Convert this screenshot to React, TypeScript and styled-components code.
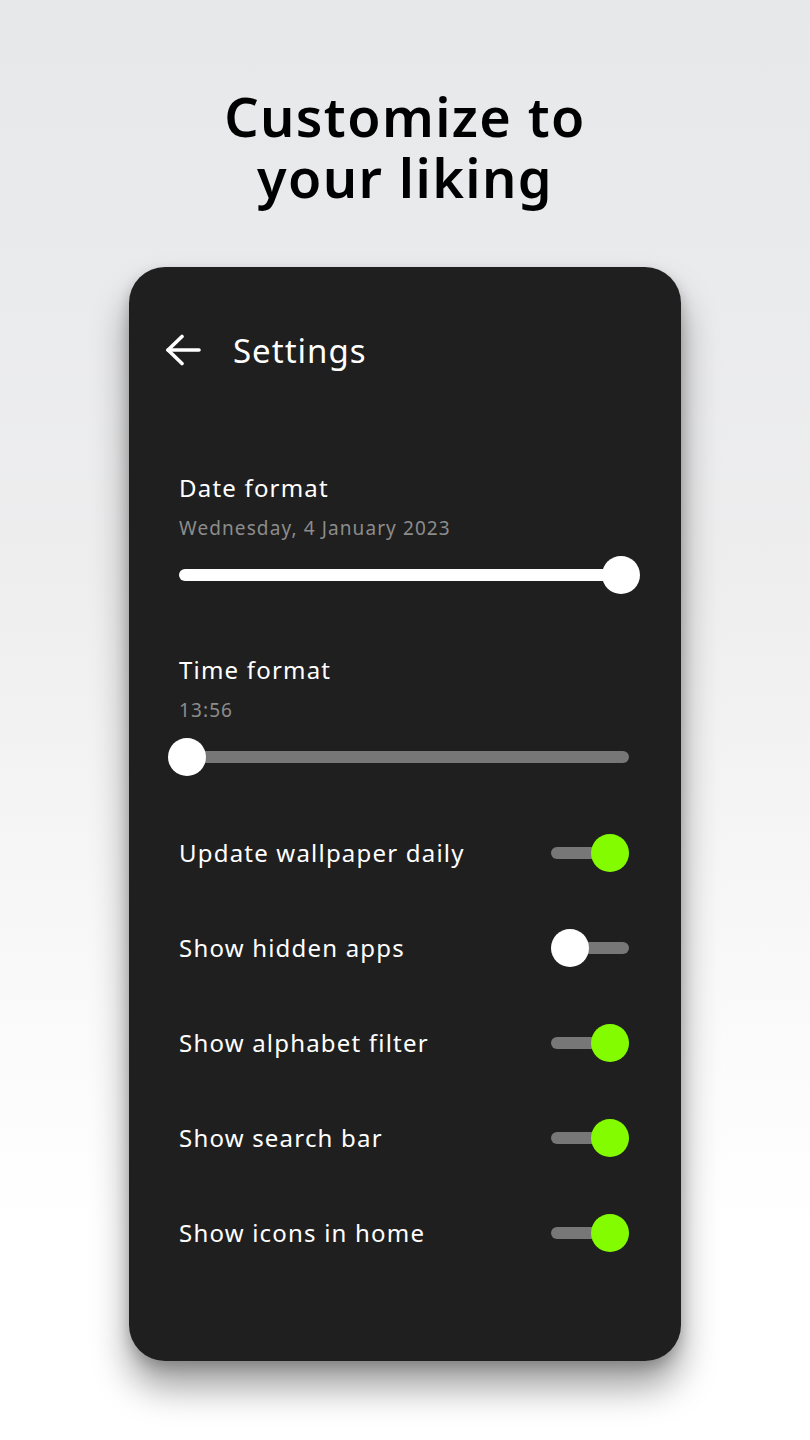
import React from 'react';
import styled, { createGlobalStyle } from 'styled-components';

const GlobalStyle = createGlobalStyle`
  html, body {
    margin: 0;
    padding: 0;
  }
  body {
    min-height: 1440px;
    background: linear-gradient(180deg, #e7e8ea 0%, #eeeeef 40%, #f8f8f8 65%, #ffffff 85%);
    font-family: 'Noto Sans', 'Open Sans', sans-serif;
  }
`;

const Page = styled.div`
  width: 810px;
  height: 1440px;
  display: flex;
  flex-direction: column;
  align-items: center;
  overflow: hidden;
`;

const Title = styled.h1`
  margin: 86px 0 0;
  height: 181px;
  font-size: 54px;
  line-height: 61px;
  font-weight: 600;
  letter-spacing: 1.4px;
  color: #000;
  text-align: center;
`;

const Card = styled.div`
  width: 552px;
  box-sizing: border-box;
  padding: 58px 52px 81px 50px;
  background: #1f1f1f;
  border-radius: 36px;
  box-shadow: 0 26px 36px rgba(0, 0, 0, 0.38), 0 6px 14px rgba(0, 0, 0, 0.2);
  color: #fff;
`;

const Header = styled.div`
  display: flex;
  align-items: center;
  height: 50px;
  margin-left: -14px;
  gap: 32px;
`;

const HeaderTitle = styled.span`
  font-size: 33px;
  font-weight: 400;
  letter-spacing: 1px;
`;

const Section = styled.div<{ $top: number }>`
  margin-top: ${(p) => p.$top}px;
`;

const Label = styled.div`
  font-size: 24px;
  line-height: 30px;
  height: 30px;
  letter-spacing: 1.2px;
`;

const Sub = styled.div`
  margin-top: 13px;
  font-size: 19px;
  line-height: 24px;
  letter-spacing: 1.1px;
  color: #8c8c8c;
`;

const SliderWrap = styled.div`
  position: relative;
  margin-top: 16px;
  height: 38px;
  display: flex;
  align-items: center;
`;

const Track = styled.div<{ $active: boolean }>`
  width: 100%;
  height: 12px;
  border-radius: 6px;
  background: ${(p) => (p.$active ? '#ffffff' : '#777777')};
`;

const Thumb = styled.div<{ $end: boolean }>`
  position: absolute;
  top: 0;
  ${(p) => (p.$end ? 'right: -11px;' : 'left: -11px;')}
  width: 38px;
  height: 38px;
  border-radius: 50%;
  background: #fff;
`;

const ToggleList = styled.div`
  margin-top: 29px;
`;

const Row = styled.div`
  display: flex;
  align-items: center;
  justify-content: space-between;
  height: 95px;
`;

const SwitchBox = styled.div`
  position: relative;
  width: 78px;
  height: 38px;
  display: flex;
  align-items: center;
`;

const SwitchTrack = styled.div`
  width: 100%;
  height: 12px;
  border-radius: 6px;
  background: #777777;
`;

const SwitchKnob = styled.div<{ $on: boolean }>`
  position: absolute;
  top: 0;
  ${(p) => (p.$on ? 'right: 0;' : 'left: 0;')}
  width: 38px;
  height: 38px;
  border-radius: 50%;
  background: ${(p) => (p.$on ? '#84fc00' : '#ffffff')};
`;

const BackArrow = () => (
  <svg width="36" height="32" viewBox="0 0 36 32" fill="none">
    <path d="M3 16H34" stroke="#fff" strokeWidth="3.6" strokeLinecap="round" />
    <path d="M17 2.5L3 16L17 29.5" stroke="#fff" strokeWidth="3.6" strokeLinecap="round" strokeLinejoin="round" />
  </svg>
);

const toggles = [
  { label: 'Update wallpaper daily', on: true },
  { label: 'Show hidden apps', on: false },
  { label: 'Show alphabet filter', on: true },
  { label: 'Show search bar', on: true },
  { label: 'Show icons in home', on: true },
];

const App: React.FC = () => (
  <Page>
    <GlobalStyle />
    <Title>
      Customize to
      <br />
      your liking
    </Title>
    <Card>
      <Header>
        <BackArrow />
        <HeaderTitle>Settings</HeaderTitle>
      </Header>
      <Section $top={98}>
        <Label>Date format</Label>
        <Sub>Wednesday, 4 January 2023</Sub>
        <SliderWrap>
          <Track $active />
          <Thumb $end />
        </SliderWrap>
      </Section>
      <Section $top={61}>
        <Label>Time format</Label>
        <Sub>13:56</Sub>
        <SliderWrap>
          <Track $active={false} />
          <Thumb $end={false} />
        </SliderWrap>
      </Section>
      <ToggleList>
        {toggles.map((t) => (
          <Row key={t.label}>
            <Label>{t.label}</Label>
            <SwitchBox>
              <SwitchTrack />
              <SwitchKnob $on={t.on} />
            </SwitchBox>
          </Row>
        ))}
      </ToggleList>
    </Card>
  </Page>
);

export default App;
